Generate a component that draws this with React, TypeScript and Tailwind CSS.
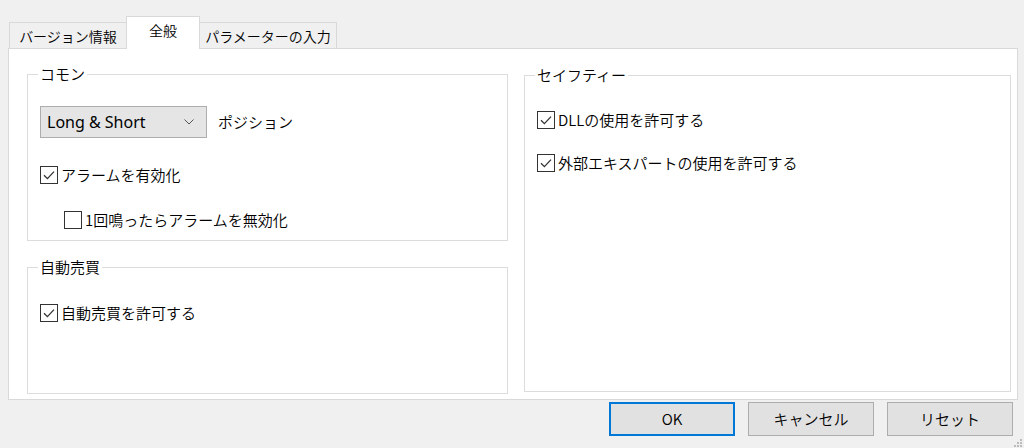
import React, { useState } from 'react';

const FONT = "font-['Noto_Sans_CJK_JP','Noto_Sans',sans-serif]";

const TABS = ['バージョン情報', '全般', 'パラメーターの入力'];

// Windows-style checkbox with a label
const Check = ({ label, checked, onToggle, className = '' }: { label: string; checked: boolean; onToggle: () => void; className?: string }) => (
  <label className={`flex items-center gap-[3px] cursor-default select-none ${className}`} onClick={onToggle}>
    <span className="flex h-[18px] w-[18px] items-center justify-center border border-[#333333] bg-white">
      {checked && (
        <svg width="14" height="14" viewBox="0 0 14 14" fill="none">
          <path d="M2 7.2 L5.4 10.6 L12 3.6" stroke="#333333" strokeWidth="1.3" />
        </svg>
      )}
    </span>
    <span className="text-[15px] leading-[20px] text-black">{label}</span>
  </label>
);

// group box: bordered area with its caption sitting on the top border
const Group = ({ title, className = '', children }: { title: string; className?: string; children: React.ReactNode }) => (
  <div className={`relative mt-[10px] border border-[#dcdcdc] px-[12px] ${className}`}>
    <span className="absolute left-[10px] top-[-11px] bg-white px-[2px] text-[15px] leading-[20px] text-black">{title}</span>
    {children}
  </div>
);

export default function App() {
  const [tab, setTab] = useState(1);
  const [alarm, setAlarm] = useState(true);
  const [once, setOnce] = useState(false);
  const [autoTrade, setAutoTrade] = useState(true);
  const [dll, setDll] = useState(true);
  const [experts, setExperts] = useState(true);

  return (
    <div className={`relative h-[448px] w-[1024px] overflow-hidden bg-[#f0f0f0] font-[350] ${FONT}`}>
      {/* tab strip */}
      <div className="flex h-[48px] items-end pl-[9px]">
        {TABS.map((t, i) => {
          const active = i === tab;
          const w = i === 0 ? 'w-[117px]' : i === 1 ? 'w-[74px]' : 'w-[137px]';
          return (
            <button
              key={t}
              onClick={() => setTab(i)}
              className={`${w} relative border border-[#d9d9d9] text-[14px] leading-[20px] text-black ${
                active ? 'z-10 -mb-px h-[33px] border-b-0 bg-white pb-[6px]' : 'h-[26px] border-b-0 bg-[#f0f0f0]'
              } ${i === 0 ? 'border-r-0' : ''} ${i === 2 ? 'border-l-0' : ''}`}
            >
              {t}
            </button>
          );
        })}
      </div>

      {/* panel */}
      <div className="ml-[8px] flex h-[352px] w-[1010px] gap-[16px] border border-[#d9d9d9] bg-white pl-[18px] pt-[15px]">
        <div className="flex w-[481px] flex-col gap-[16px]">
          <Group title="コモン" className="h-[167px]">
            <div className="mt-[31px] flex items-center gap-[11px]">
              <div className="flex h-[32px] w-[167px] items-center justify-between border border-[#adadad] bg-[#e5e5e5] pl-[6px] pr-[12px]">
                <span className="font-['Noto_Sans',sans-serif] text-[16px] font-normal leading-[20px] text-black">Long &amp; Short</span>
                <svg width="10" height="6" viewBox="0 0 10 6" fill="none">
                  <path d="M0.5 0.5 L5 5 L9.5 0.5" stroke="#555555" strokeWidth="1" />
                </svg>
              </div>
              <span className="text-[15px] leading-[20px] text-black">ポジション</span>
            </div>
            <Check className="mt-[27px]" label="アラームを有効化" checked={alarm} onToggle={() => setAlarm(!alarm)} />
            <Check className="ml-[24px] mt-[25px]" label="1回鳴ったらアラームを無効化" checked={once} onToggle={() => setOnce(!once)} />
          </Group>
          <Group title="自動売買" className="h-[127px]">
            <Check className="mt-[35px]" label="自動売買を許可する" checked={autoTrade} onToggle={() => setAutoTrade(!autoTrade)} />
          </Group>
        </div>
        <div className="flex w-[487px] flex-col pt-[1px]">
          <Group title="セイフティー" className="h-[317px]">
            <Check className="mt-[34px]" label="DLLの使用を許可する" checked={dll} onToggle={() => setDll(!dll)} />
            <Check className="mt-[23px]" label="外部エキスパートの使用を許可する" checked={experts} onToggle={() => setExperts(!experts)} />
          </Group>
        </div>
      </div>

      {/* buttons */}
      <div className="mt-[2px] flex justify-end gap-[13px] pr-[11px]">
        <button className="h-[34px] w-[126px] border-2 border-[#0078d7] bg-[#e1e1e1] text-[15px] text-black">OK</button>
        <button className="h-[34px] w-[126px] border border-[#adadad] bg-[#e1e1e1] text-[15px] text-black">キャンセル</button>
        <button className="h-[34px] w-[126px] border border-[#adadad] bg-[#e1e1e1] text-[15px] text-black">リセット</button>
      </div>

      {/* size grip */}
      <svg className="absolute bottom-[1px] right-[2px]" width="10" height="10" viewBox="0 0 10 10">
        {[[8, 2], [8, 5], [5, 5], [8, 8], [5, 8], [2, 8]].map(([x, y]) => (
          <rect key={`${x}-${y}`} x={x} y={y} width="2" height="2" fill="#bcbcbc" />
        ))}
      </svg>
    </div>
  );
}
